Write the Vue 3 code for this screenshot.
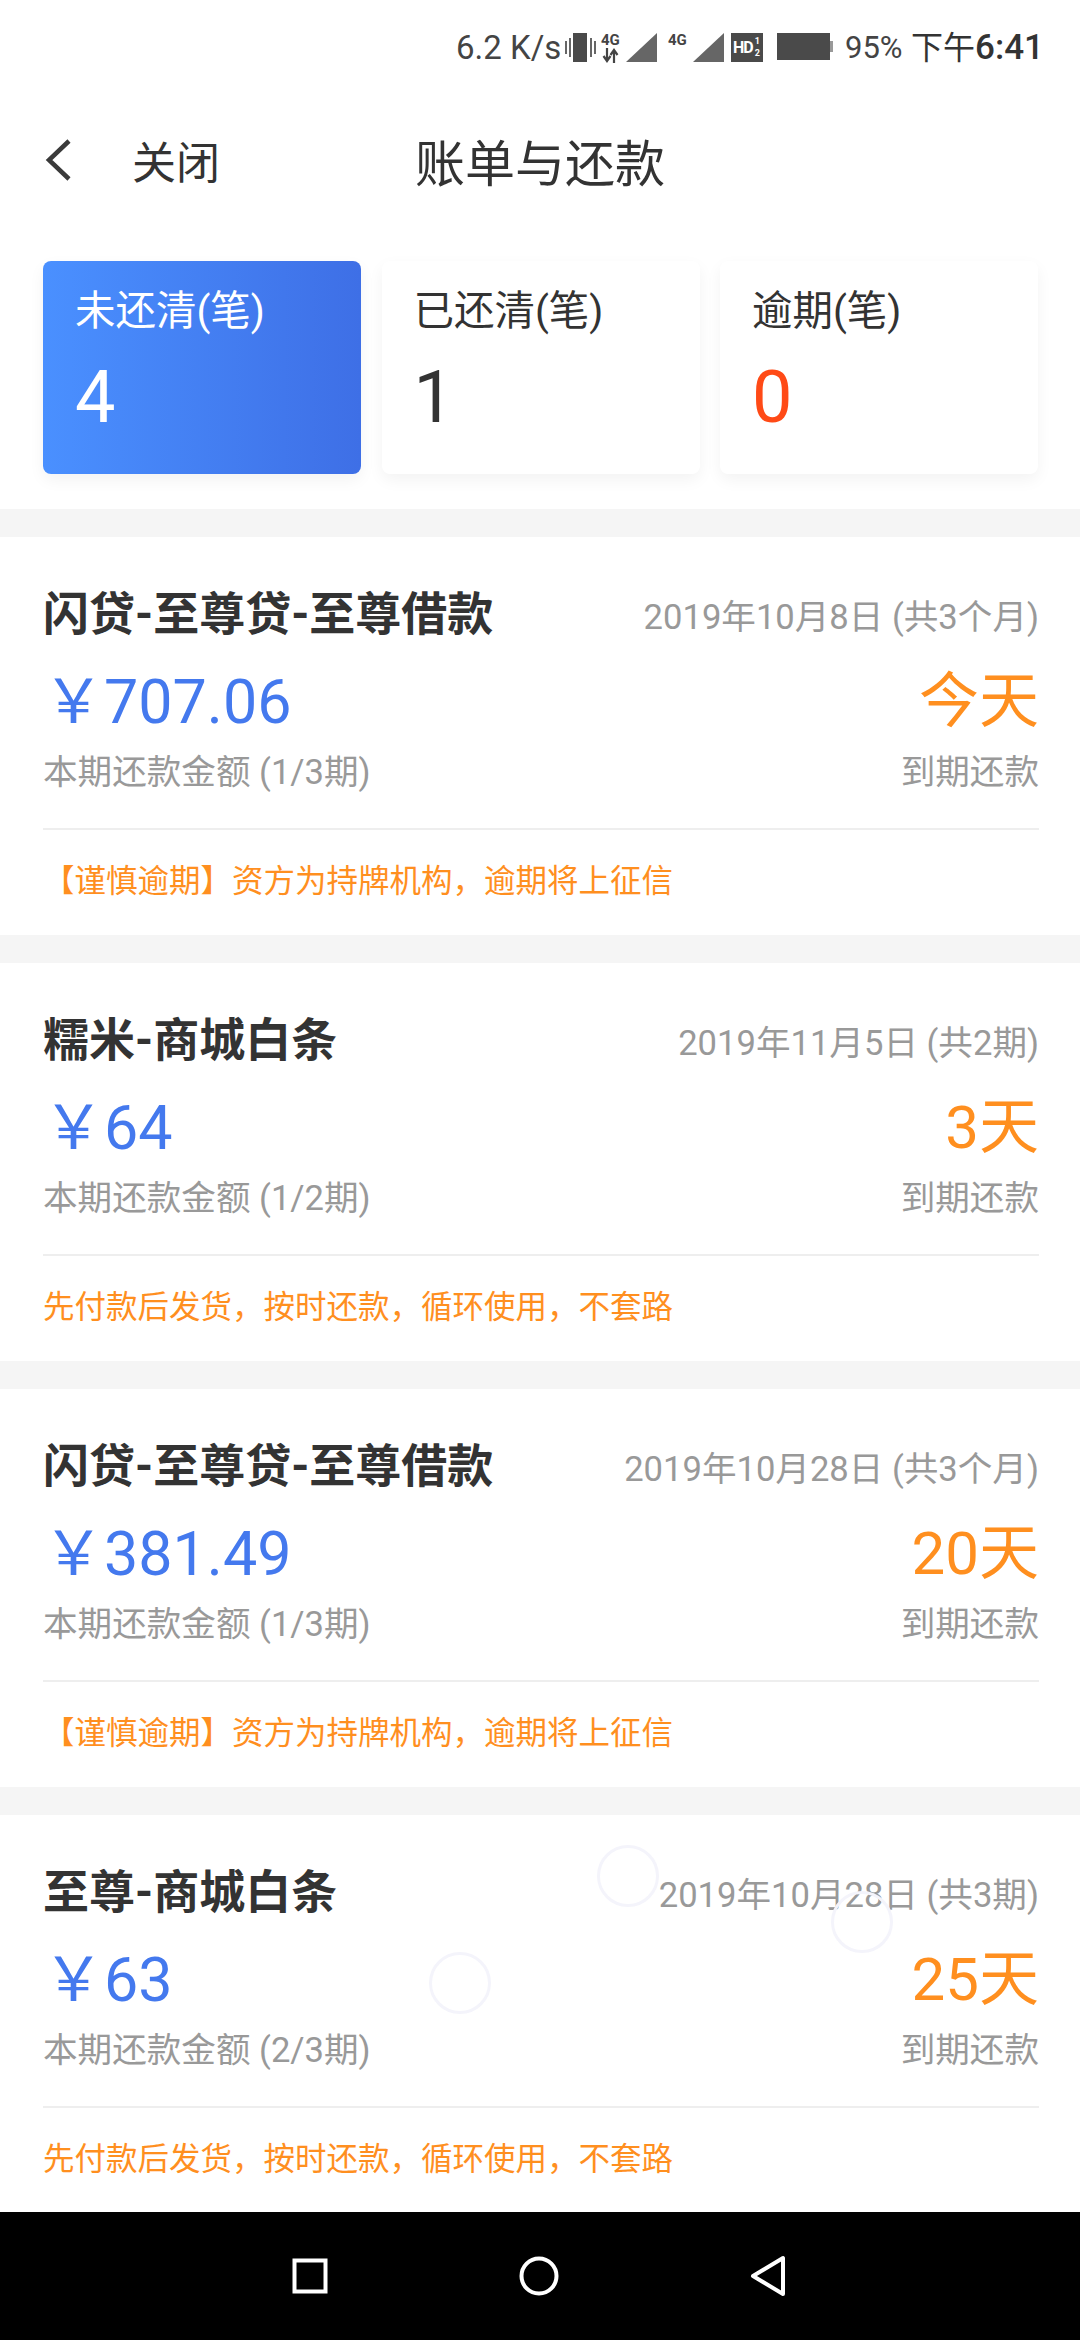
<script setup>
const tabs = [
  { label: "未还清(笔)", count: 4, type: "active" },
  { label: "已还清(笔)", count: 1, type: "" },
  { label: "逾期(笔)", count: 0, type: "late" },
];

const warn = "【谨慎逾期】资方为持牌机构，逾期将上征信";
const easy = "先付款后发货，按时还款，循环使用，不套路";

const bills = [
  { name: "闪贷-至尊贷-至尊借款", date: "2019年10月8日 (共3个月)", amount: "707.06", term: "本期还款金额 (1/3期)", days: "今天", note: warn },
  { name: "糯米-商城白条", date: "2019年11月5日 (共2期)", amount: "64", term: "本期还款金额 (1/2期)", days: "3天", note: easy },
  { name: "闪贷-至尊贷-至尊借款", date: "2019年10月28日 (共3个月)", amount: "381.49", term: "本期还款金额 (1/3期)", days: "20天", note: warn },
  { name: "至尊-商城白条", date: "2019年10月28日 (共3期)", amount: "63", term: "本期还款金额 (2/3期)", days: "25天", note: easy },
];
</script>

<template>
  <div class="screen">
    <div class="status">
      <span class="speed">6.2 K/s</span>
      <svg class="ic-vib" width="34" height="30" viewBox="0 0 34 30">
        <rect x="9" y="0" width="14" height="29" fill="#4a4a4a" />
        <rect x="1" y="8" width="2" height="13" fill="#666" />
        <rect x="5" y="5" width="2" height="19" fill="#666" />
        <rect x="26" y="5" width="2" height="19" fill="#666" />
        <rect x="30" y="8" width="2" height="13" fill="#666" />
      </svg>
      <div class="net">
        <span class="net-label">4G</span>
        <svg width="19" height="15" viewBox="0 0 19 15">
          <path d="M6 0v11M2.5 8l3.5 5 3.500-5M13 15V4M9.500 7l3.500-5 3.500 5" fill="none" stroke="#444" stroke-width="2.200" />
        </svg>
      </div>
      <svg class="ic-sig" width="31" height="29" viewBox="0 0 31 29"><path d="M31 0v29H0z" fill="#666" /></svg>
      <span class="net-label second">4G</span>
      <svg class="ic-sig2" width="31" height="29" viewBox="0 0 31 29"><path d="M31 0v29H0z" fill="#666" /></svg>
      <div class="hd"><span class="hd-main">HD</span><span class="hd-frac">1<br />2</span></div>
      <div class="battery"><i></i></div>
      <span class="percent">95%</span>
      <span class="time">下午<b>6:41</b></span>
    </div>

    <header class="nav">
      <div class="nav-side">
        <svg width="27" height="44" viewBox="0 0 27 44">
          <path d="M24 3 4 22l20 19" fill="none" stroke="#3a3a3a" stroke-width="4.500" />
        </svg>
        <span class="close">关闭</span>
      </div>
      <h1 class="title">账单与还款</h1>
      <div class="nav-side"></div>
    </header>

    <section class="tabs">
      <div v-for="t in tabs" :key="t.label" class="tab" :class="t.type">
        <p class="tab-label">{{ t.label }}</p>
        <p class="tab-count">{{ t.count }}</p>
      </div>
    </section>

    <article v-for="(b, i) in bills" :key="i" class="bill">
      <div class="row head">
        <h2 class="name">{{ b.name }}</h2>
        <span class="date">{{ b.date }}</span>
      </div>
      <div class="row big">
        <span class="amount">￥{{ b.amount }}</span>
        <span class="days">{{ b.days }}</span>
      </div>
      <div class="row sub">
        <span>{{ b.term }}</span>
        <span>到期还款</span>
      </div>
      <p class="note">{{ b.note }}</p>
    </article>

    <i class="ripple r1"></i>
    <i class="ripple r2"></i>
    <i class="ripple r3"></i>

    <footer class="softkeys">
      <svg width="36" height="36" viewBox="0 0 36 36"><rect x="2.500" y="2.500" width="31" height="31" fill="none" stroke="#fff" stroke-width="4" /></svg>
      <svg width="40" height="40" viewBox="0 0 40 40"><circle cx="20" cy="20" r="17.500" fill="none" stroke="#fff" stroke-width="4" /></svg>
      <svg width="36" height="42" viewBox="0 0 36 42"><path d="M33 3v36L3 21z" fill="none" stroke="#fff" stroke-width="4" stroke-linejoin="round" /></svg>
    </footer>
  </div>
</template>

<style scoped>
.screen {
  position: relative;
  width: 1080px;
  height: 2340px;
  overflow: hidden;
  background: #f5f5f5;
  font-family: Roboto, "Noto Sans CJK SC", sans-serif;
  color: #333;
}

p,
h1,
h2 {
  margin: 0;
  font-weight: 400;
}

.status {
  height: 96px;
  padding-top: 33px;
  box-sizing: border-box;
  background: #fff;
  display: flex;
  align-items: flex-start;
  padding-left: 456px;
  color: #444;
}

.speed {
  width: 108px;
  font-size: 33px;
  line-height: 30px;
  white-space: nowrap;
}

.ic-vib {
  flex: none;
}

.net {
  width: 19px;
  margin-left: 3px;
  display: flex;
  flex-direction: column;
}

.net-label {
  font-size: 15px;
  line-height: 14px;
  font-weight: 700;
  color: #444;
}

.net svg {
  margin-top: 1px;
}

.ic-sig {
  margin-left: 6px;
  flex: none;
}

.second {
  width: 19px;
  margin-left: 11px;
}

.ic-sig2 {
  margin-left: 6px;
  flex: none;
}

.hd {
  width: 32px;
  height: 29px;
  margin-left: 7px;
  background: #4a4a4a;
  color: #fff;
  font-weight: 700;
  display: flex;
  padding-left: 2px;
  box-sizing: border-box;
}

.hd-main {
  font-size: 16px;
  line-height: 29px;
  letter-spacing: -1px;
}

.hd-frac {
  font-size: 9px;
  line-height: 12px;
  margin-left: 2px;
  padding-top: 2px;
}

.battery {
  margin-left: 14px;
  width: 53px;
  height: 27px;
  background: #4a4a4a;
  position: relative;
  flex: none;
}

.battery i {
  position: absolute;
  left: 53px;
  top: 8px;
  width: 3px;
  height: 11px;
  background: #999;
}

.percent {
  margin-left: 15px;
  width: 66px;
  font-size: 31px;
  line-height: 30px;
  white-space: nowrap;
}

.time {
  font-size: 32px;
  line-height: 30px;
  white-space: nowrap;
  color: #333;
}

.time b {
  font-size: 35px;
  font-weight: 500;
}

.nav {
  height: 165px;
  padding-bottom: 37px;
  box-sizing: border-box;
  background: #fff;
  display: flex;
  align-items: center;
  padding-left: 45px;
  padding-right: 45px;
}

.nav-side {
  flex: 1;
  display: flex;
  align-items: center;
}

.close {
  margin-left: 60px;
  font-size: 44px;
}

.title {
  font-size: 50px;
}

.tabs {
  height: 248px;
  box-sizing: border-box;
  background: #fff;
  padding: 0 42px 0 43px;
  display: flex;
  gap: 20.500px;
}

.tab {
  flex: 1;
  height: 213px;
  box-sizing: border-box;
  border-radius: 8px;
  padding: 22px 32px;
  background: #fff;
  box-shadow: 0 6px 16px rgba(0, 0, 0, 0.05);
}

.tab.active {
  background: linear-gradient(90deg, #4a90ff, #3e6fe6);
  color: #fff;
}

.tab-label {
  font-size: 40.500px;
  line-height: 56px;
}

.tab-count {
  margin-top: 17px;
  font-size: 72px;
  line-height: 84px;
}

.tab.late .tab-count {
  color: #ff4a16;
}

.bill {
  height: 398px;
  margin-top: 28px;
  box-sizing: border-box;
  background: #fff;
  padding: 47px 41px 0 43px;
}

.row {
  display: flex;
  justify-content: space-between;
  align-items: center;
}

.head {
  height: 60px;
}

.name {
  font-size: 46px;
  font-weight: 700;
  line-height: 60px;
  color: #333;
}

.date {
  font-size: 34.600px;
  color: #999;
}

.big {
  height: 60px;
  margin-top: 28px;
}

.amount {
  font-size: 61px;
  line-height: 60px;
  color: #4479ee;
}

.days {
  font-size: 60px;
  line-height: 60px;
  color: #ff8f1f;
}

.sub {
  height: 50px;
  margin-top: 12px;
  font-size: 34.600px;
  color: #999;
  padding-bottom: 34px;
  border-bottom: 2px solid #eee;
}

.note {
  margin-top: 29px;
  font-size: 31.500px;
  line-height: 46px;
  color: #ff8f1f;
  white-space: nowrap;
}

.ripple {
  position: absolute;
  width: 56px;
  height: 56px;
  border: 3px solid #f4f4fb;
  border-radius: 50%;
}

.r1 {
  left: 597px;
  top: 1845px;
}

.r2 {
  left: 429px;
  top: 1952px;
}

.r3 {
  left: 831px;
  top: 1891px;
}

.softkeys {
  position: absolute;
  left: 0;
  right: 0;
  bottom: 0;
  height: 128px;
  background: #000;
  display: flex;
  align-items: center;
  padding-left: 292px;
  gap: 191px;
}
</style>
